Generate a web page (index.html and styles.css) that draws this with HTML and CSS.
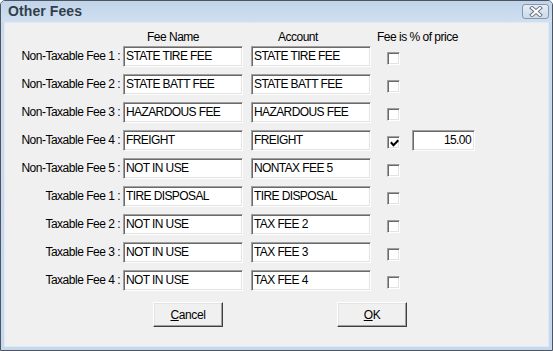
FILE: index.html
```html
<!DOCTYPE html>
<html>
<head>
<meta charset="utf-8">
<link rel="stylesheet" href="styles.css">
</head>
<body>
<div class="window">
  <div class="titlebar">
    <span class="title">Other Fees</span>
    <span class="close">
      <svg width="14" height="11" viewBox="0 0 14 11">
        <path d="M3 2 L11 9 M11 2 L3 9" stroke="#6b7785" stroke-width="4" stroke-linecap="square"/>
        <path d="M3 2 L11 9 M11 2 L3 9" stroke="#ffffff" stroke-width="2" stroke-linecap="square"/>
      </svg>
    </span>
  </div>
  <div class="client">
    <div class="head">
      <span class="h h-label"></span>
      <span class="h h-name">Fee Name</span>
      <span class="h h-acct">Account</span>
      <span class="h h-pct">Fee is % of price</span>
    </div>
    <div class="rows">
      <div class="row"><span class="label">Non-Taxable Fee 1 :</span><span class="field">STATE TIRE FEE</span><span class="field f2">STATE TIRE FEE</span><span class="check"></span></div>
      <div class="row"><span class="label">Non-Taxable Fee 2 :</span><span class="field">STATE BATT FEE</span><span class="field f2">STATE BATT FEE</span><span class="check"></span></div>
      <div class="row"><span class="label">Non-Taxable Fee 3 :</span><span class="field">HAZARDOUS FEE</span><span class="field f2">HAZARDOUS FEE</span><span class="check"></span></div>
      <div class="row"><span class="label">Non-Taxable Fee 4 :</span><span class="field">FREIGHT</span><span class="field f2">FREIGHT</span><span class="check"><svg width="9" height="9" viewBox="0 0 9 9"><path d="M1.5 4 L3.5 6.3 L7.6 2" stroke="#000" stroke-width="2" fill="none" stroke-linecap="square"/></svg></span><span class="field pct">15.00</span></div>
      <div class="row"><span class="label">Non-Taxable Fee 5 :</span><span class="field">NOT IN USE</span><span class="field f2">NONTAX FEE 5</span><span class="check"></span></div>
      <div class="row"><span class="label">Taxable Fee 1 :</span><span class="field">TIRE DISPOSAL</span><span class="field f2">TIRE DISPOSAL</span><span class="check"></span></div>
      <div class="row"><span class="label">Taxable Fee 2 :</span><span class="field">NOT IN USE</span><span class="field f2">TAX FEE 2</span><span class="check"></span></div>
      <div class="row"><span class="label">Taxable Fee 3 :</span><span class="field">NOT IN USE</span><span class="field f2">TAX FEE 3</span><span class="check"></span></div>
      <div class="row"><span class="label">Taxable Fee 4 :</span><span class="field">NOT IN USE</span><span class="field f2">TAX FEE 4</span><span class="check"></span></div>
    </div>
    <div class="buttons">
      <span class="btn btn-cancel"><u>C</u>ancel</span>
      <span class="btn btn-ok"><u>O</u>K</span>
    </div>
  </div>
</div>
</body>
</html>
```
FILE: styles.css
```css
html, body {
  margin: 0;
  padding: 0;
  background: #ffffff;
}
body {
  font-family: "Liberation Sans", Arial, sans-serif;
  font-size: 12px;
  color: #000;
}
.window {
  box-sizing: border-box;
  width: 553px;
  height: 351px;
  border: 1px solid #4f5560;
  border-radius: 5px 5px 0 0;
  background: linear-gradient(#c2d6ec, #cbdcee 30px, #c6d8ec);
  padding: 0 3px 3px 3px;
  display: flex;
  flex-direction: column;
}
.titlebar {
  height: 21px;
  display: flex;
  align-items: flex-start;
  background: linear-gradient(#c0d4ea, #cfdff0);
  margin: 0 -3px;
  padding: 0 3px;
  border-radius: 4px 4px 0 0;
}
.title {
  font-weight: bold;
  font-size: 14px;
  line-height: 21px;
  color: #323e4b;
  padding-left: 4px;
  letter-spacing: 0.1px;
}
.close {
  margin-left: auto;
  margin-top: 3px;
  box-sizing: border-box;
  width: 27px;
  height: 15px;
  border: 1px solid #8796a8;
  border-radius: 3px;
  background: linear-gradient(#e6eef7, #cbd9e9);
  display: flex;
  align-items: center;
  justify-content: center;
}
.close svg { display: block; }
.client {
  flex: 1;
  background: #f0f0f0;
  box-shadow: inset 0 0 0 1px #dfe9f5;
  display: flex;
  flex-direction: column;
}
.head {
  display: flex;
  margin-top: 8px;
  height: 14px;
  line-height: 14px;
  letter-spacing: -0.5px;
}
.h-label { width: 119px; }
.h-name { width: 104px; padding-left: 24px; }
.h-acct { width: 99px; padding-left: 27px; }
.h-pct { white-space: nowrap; }
.rows {
  margin-top: 2px;
  display: flex;
  flex-direction: column;
  gap: 7px;
}
.row {
  display: flex;
  align-items: flex-start;
  height: 21px;
}
.label {
  width: 116px;
  margin-right: 3px;
  text-align: right;
  line-height: 21px;
  letter-spacing: -0.5px;
  white-space: nowrap;
}
.field {
  box-sizing: border-box;
  width: 120px;
  height: 21px;
  background: #fff;
  border-top: 1px solid #a0a0a0;
  border-left: 1px solid #a0a0a0;
  border-right: 1px solid #ffffff;
  border-bottom: 1px solid #ffffff;
  box-shadow: inset 1px 1px 0 #696969, inset -1px -1px 0 #e3e3e3;
  padding: 0 2px;
  line-height: 19px;
  letter-spacing: -0.6px;
  white-space: nowrap;
  overflow: hidden;
}
.f2 { margin-left: 8px; }
.check {
  box-sizing: border-box;
  width: 13px;
  height: 13px;
  margin-left: 16px;
  margin-top: 6px;
  background: #fff;
  border-top: 1px solid #a0a0a0;
  border-left: 1px solid #a0a0a0;
  border-right: 1px solid #ffffff;
  border-bottom: 1px solid #ffffff;
  box-shadow: inset 1px 1px 0 #696969, inset -1px -1px 0 #e3e3e3;
  display: flex;
  align-items: center;
  justify-content: center;
}
.check svg { display: block; margin: 1px 0 0 1px; }
.pct {
  width: 63px;
  margin-left: 12px;
  text-align: right;
  padding-right: 3px;
}
.buttons {
  display: flex;
  margin-top: 11px;
}
.btn {
  box-sizing: border-box;
  width: 70px;
  height: 25px;
  border-top: 1px solid #ffffff;
  border-left: 1px solid #ffffff;
  border-right: 1px solid #404040;
  border-bottom: 1px solid #404040;
  box-shadow: inset -1px -1px 0 #a0a0a0, inset 1px 1px 0 #e3e3e3;
  background: #f0f0f0;
  display: flex;
  align-items: center;
  justify-content: center;
  letter-spacing: -0.4px;
}
.btn u { text-decoration: underline; text-underline-offset: 1px; }
.btn-cancel { margin-left: 149px; }
.btn-ok { margin-left: 114px; }
```
